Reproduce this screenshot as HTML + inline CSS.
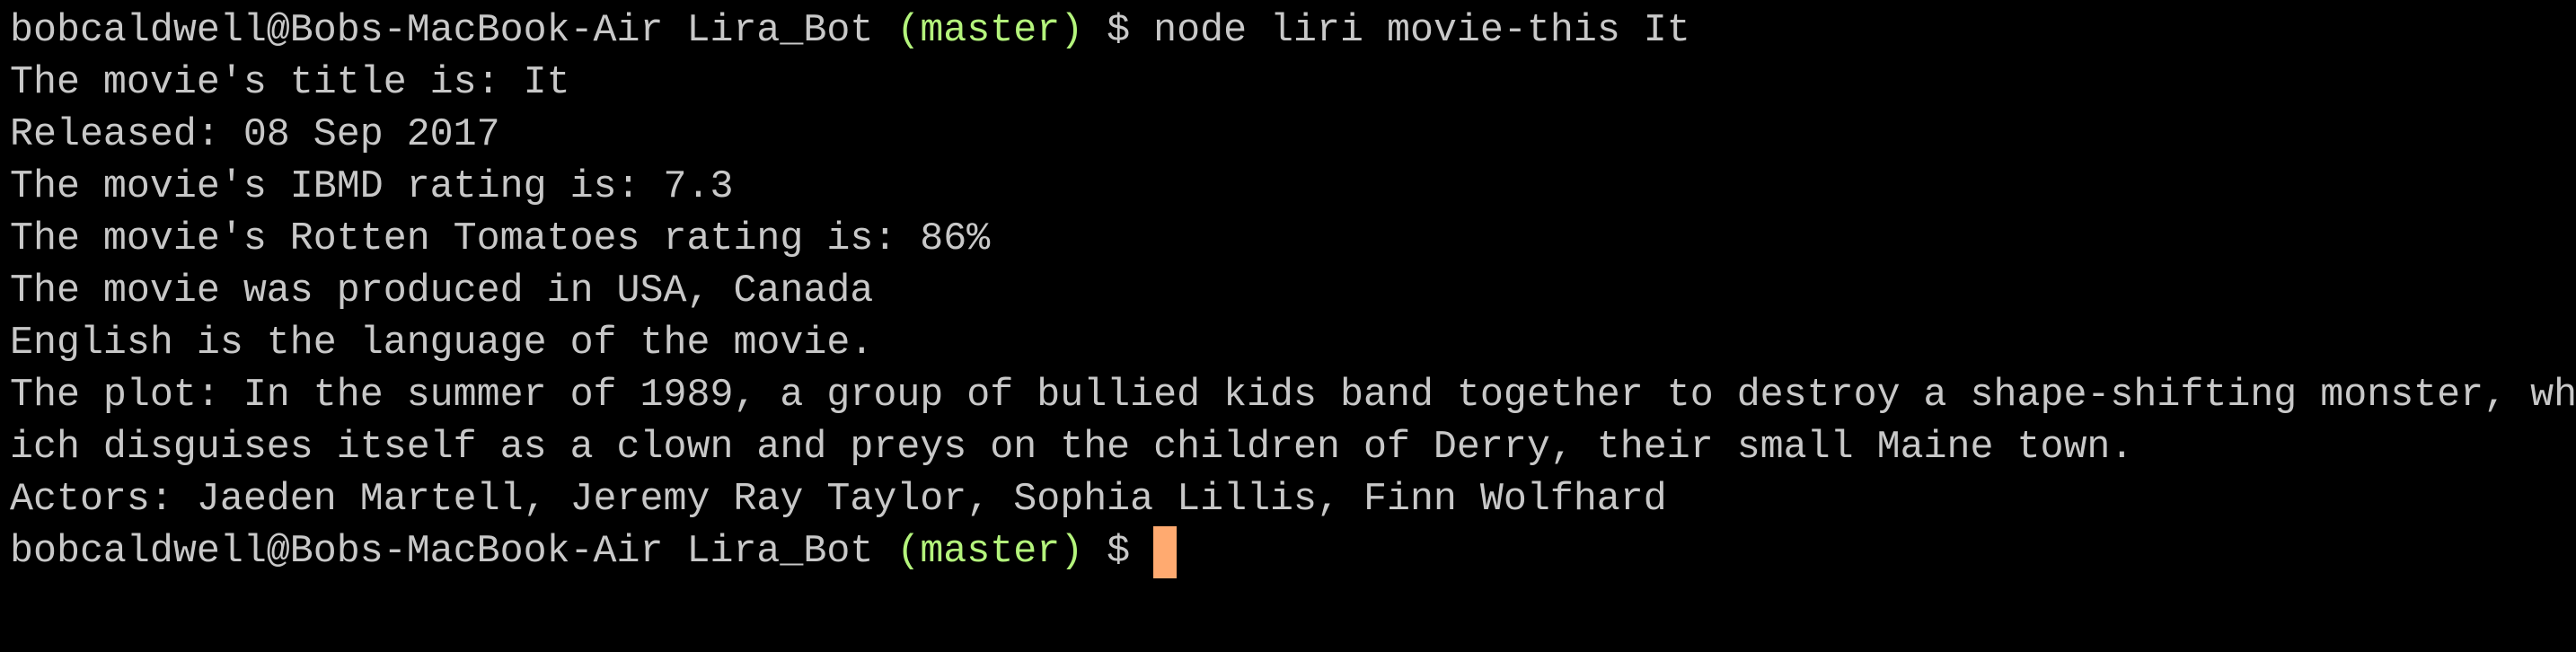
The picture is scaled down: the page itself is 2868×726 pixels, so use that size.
<!DOCTYPE html>
<html><head><meta charset="utf-8"><style>
html,body{margin:0;padding:0;background:#000;width:2868px;height:726px;overflow:hidden}
pre{margin:0;padding:6px 0 0 11px;font-family:"Liberation Mono","DejaVu Sans Mono",monospace;font-size:43.3px;line-height:58px;color:#c8c8c8;white-space:pre}
.g{color:#b4f47c}
.c{display:inline-block;width:26px;height:58px;background:#ffaa70;vertical-align:top}
</style></head><body><pre>bobcaldwell@Bobs-MacBook-Air Lira_Bot <span class="g">(master)</span> $ node liri movie-this It
The movie's title is: It
Released: 08 Sep 2017
The movie's IBMD rating is: 7.3
The movie's Rotten Tomatoes rating is: 86%
The movie was produced in USA, Canada
English is the language of the movie.
The plot: In the summer of 1989, a group of bullied kids band together to destroy a shape-shifting monster, wh
ich disguises itself as a clown and preys on the children of Derry, their small Maine town.
Actors: Jaeden Martell, Jeremy Ray Taylor, Sophia Lillis, Finn Wolfhard
bobcaldwell@Bobs-MacBook-Air Lira_Bot <span class="g">(master)</span> $ <span class="c"></span></pre></body></html>
